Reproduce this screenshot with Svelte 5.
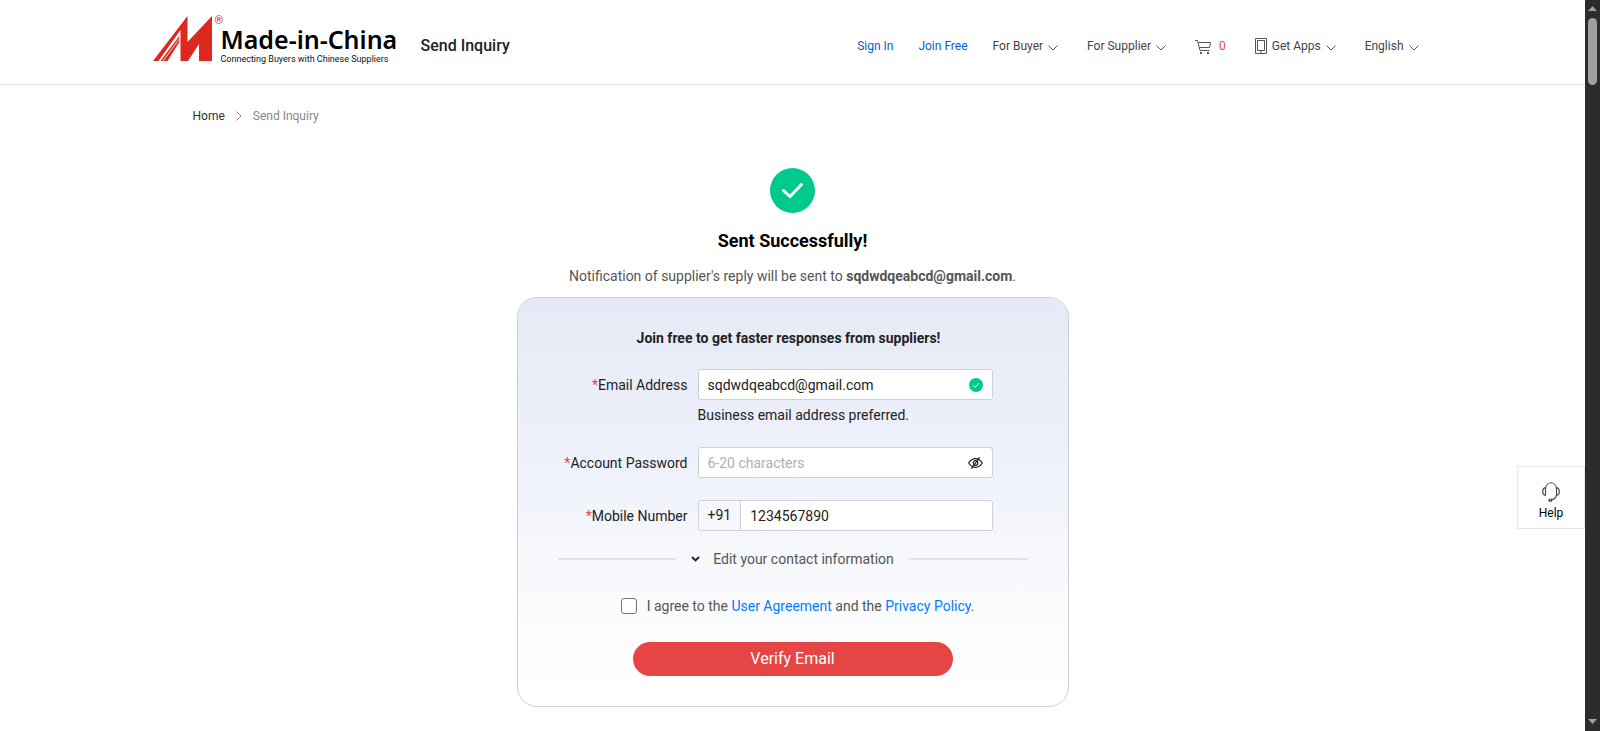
<script>
  let email = $state('sqdwdqeabcd@gmail.com');
  let password = $state('');
  let phone = $state('1234567890');
  let agreed = $state(false);
</script>

{#snippet chevron()}
  <svg class="chevron" viewBox="0 0 10 6" aria-hidden="true"><path d="M.5 .5 5 5 9.500 .5" /></svg>
{/snippet}

<div class="screen">
  <div class="page">
    <header>
      <div class="header-inner">
        <a class="logo" href="#home">
          <svg class="mark" viewBox="0 0 60 46" aria-hidden="true">
            <path fill="#dc281e" d="M0 45 34.500 0V26L59 0V45H46V28L35 45H27.500V14L5.500 45ZM7.500 45 26.300 20V26L14.500 45Z" />
            <path fill="none" stroke="#fff" stroke-width=".8" d="M10 45 26.500 22.500" />
          </svg>
          <span class="reg">®</span>
          <span class="wordmark">
            <span class="name">Made-in-China</span>
            <span class="tagline">Connecting Buyers with Chinese Suppliers</span>
          </span>
        </a>
        <span class="page-name">Send Inquiry</span>
        <nav>
          <a class="blue" href="#signin">Sign In</a>
          <a class="blue join" href="#join">Join Free</a>
          <button type="button">For Buyer {@render chevron()}</button>
          <button type="button">For Supplier {@render chevron()}</button>
          <a class="cart" href="#cart">
            <svg width="17" height="15" viewBox="0 0 17 15" aria-hidden="true">
              <path fill="none" stroke="#555" d="M0 1.500H2.500L5 11.500H14.500M3.500 3.500H15.500L14.500 8.500H4.500" />
              <path fill="#555" d="M5 13h2v2H5zM12 13h2v2h-2z" />
            </svg>
            <span class="count">0</span>
          </a>
          <button type="button" class="apps">
            <svg width="12" height="16" viewBox="0 0 12 16" aria-hidden="true">
              <path fill="none" stroke="#555" d="M.5 .5h11v15H.5zM2.500 2.500h7v10h-7zM5 14h2" />
            </svg>
            Get Apps {@render chevron()}
          </button>
          <button type="button">English {@render chevron()}</button>
        </nav>
      </div>
    </header>

    <main>
      <div class="breadcrumb">
        <a href="#home">Home</a>
        <svg width="6" height="10" viewBox="0 0 6 10" aria-hidden="true"><path d="M.5 .5 5 5 .5 9.500" fill="none" stroke="#888" /></svg>
        <span>Send Inquiry</span>
      </div>

      <section class="result">
        <svg class="tick" width="46" height="46" viewBox="0 0 46 46" aria-hidden="true">
          <circle cx="22.500" cy="22.500" r="22.500" fill="#00c98d" />
          <path d="M13.500 22.500 20 28.500 31.500 16.500" fill="none" stroke="#fff" stroke-width="3" stroke-linecap="round" stroke-linejoin="round" />
        </svg>
        <h1>Sent Successfully!</h1>
        <p class="notice">Notification of supplier's reply will be sent to <b>{email}</b>.</p>

        <form class="card">
          <h2>Join free to get faster responses from suppliers!</h2>

          <div class="row">
            <label for="email"><i>*</i>Email Address</label>
            <div class="field">
              <input id="email" type="text" bind:value={email} />
              <svg width="14" height="14" viewBox="0 0 14 14" aria-hidden="true">
                <circle cx="7" cy="7" r="7" fill="#00c98d" />
                <path d="M4 7.200 6.200 9.200 10 5" fill="none" stroke="#fff" />
              </svg>
            </div>
            <p class="hint">Business email address preferred.</p>
          </div>

          <div class="row">
            <label for="password"><i>*</i>Account Password</label>
            <div class="field">
              <input id="password" type="password" placeholder="6-20 characters" bind:value={password} />
              <button class="eye" type="button" aria-label="Show password">
                <svg width="15" height="12" viewBox="0 0 15 12" aria-hidden="true">
                  <g fill="none" stroke="#222" stroke-width="1.200">
                    <path d="M.7 6C3 2.500 5 1.700 7.500 1.700S12 2.500 14.300 6C12 9.500 10 10.300 7.500 10.300S3 9.500 .7 6Z" />
                    <circle cx="7.500" cy="6" r="2.300" />
                    <path d="M11.500 .3 3.500 11.700" />
                  </g>
                </svg>
              </button>
            </div>
          </div>

          <div class="row">
            <label for="phone"><i>*</i>Mobile Number</label>
            <div class="field">
              <span class="code">+91</span>
              <input id="phone" type="text" bind:value={phone} />
            </div>
          </div>

          <div class="divider">
            <button type="button">
              <svg width="9" height="6" viewBox="0 0 9 6" aria-hidden="true"><path d="M1 1 4.500 4.500 8 1" fill="none" stroke="#222" stroke-width="1.800" /></svg>
              Edit your contact information
            </button>
          </div>

          <div class="agree">
            <input id="agree" type="checkbox" bind:checked={agreed} />
            <label for="agree">I agree to the <a href="#terms">User Agreement</a> and the <a href="#privacy">Privacy Policy</a>.</label>
          </div>

          <button class="submit" type="button">Verify Email</button>
        </form>
      </section>
    </main>

    <button class="help" type="button">
      <svg width="18" height="20" viewBox="0 0 18 20" aria-hidden="true">
        <g fill="none" stroke="#444" stroke-width="1.100">
          <path d="M3.500 13.500V6.500C4 3 6.500 .7 9 .7s5 2.300 5.500 5.800v7C13.500 16.500 12 17.500 9.500 18" />
          <path d="M3.500 5.500C1.500 6 .7 7.500 .7 9.500s.8 3.500 2.800 4M14.500 5.500c2 .5 2.800 2 2.800 4s-.8 3.500-2.800 4" />
          <path d="M6 18.500H7.500M7.500 17.300H9.500V19.300H7.500Z" />
        </g>
      </svg>
      Help
    </button>
  </div>

  <div class="scrollbar" aria-hidden="true">
    <svg width="9" height="5" viewBox="0 0 9 5"><path d="M4.500 0 9 5H0Z" fill="#a0a0a0" /></svg>
    <span class="thumb"></span>
    <svg width="9" height="5" viewBox="0 0 9 5"><path d="M0 0H9L4.500 5Z" fill="#a0a0a0" /></svg>
  </div>
</div>

<style>
  :global(body) {
    background: #fff;
  }
  .screen {
    display: grid;
    grid-template-columns: minmax(0, 1fr) 15px;
    min-height: 100vh;
    font: 14px/20px Roboto, "Liberation Sans", sans-serif;
    color: #222;
  }
  button,
  input {
    font: inherit;
    color: inherit;
  }
  button {
    border: 0;
    padding: 0;
    background: none;
    cursor: pointer;
  }
  a {
    color: inherit;
    text-decoration: none;
  }
  h1, h2, p {
    margin: 0;
  }

  header {
    border-bottom: 1px solid #e4e5ea;
  }
  .header-inner {
    display: flex;
    align-items: center;
    max-width: 1280px;
    height: 84px;
    margin: 0 auto;
  }
  .logo {
    display: flex;
    align-items: flex-start;
    height: 52px;
    color: #111;
  }
  .mark {
    width: 60px;
    height: 46px;
  }
  .reg {
    width: 8px;
    margin-left: 2px;
    font-size: 11px;
    line-height: 10px;
    color: #dc281e;
  }
  .wordmark {
    display: flex;
    flex-direction: column;
    width: 178px;
    margin: 8px 0 0 -2px;
    white-space: nowrap;
  }
  .name {
    font: 600 25px/30px "Noto Sans", "Open Sans", sans-serif;
    color: #000;
  }
  .tagline {
    font-size: 9px;
    line-height: 10px;
  }
  .page-name {
    margin: 7px auto 0 22px;
    font-size: 16px;
    font-weight: 500;
  }
  nav {
    display: flex;
    align-items: center;
    gap: 29px;
    margin: 8px 14px 0 0;
    font-size: 12px;
    line-height: 16px;
    color: #444;
  }
  nav a,
  nav button {
    display: flex;
    align-items: center;
    gap: 5px;
    white-space: nowrap;
  }
  nav .blue {
    margin-right: -4px;
    color: #0064c8;
  }
  nav .cart {
    gap: 7px;
  }
  .count {
    color: #e64545;
  }
  .chevron {
    width: 10px;
    height: 6px;
    margin-top: 3px;
    fill: none;
    stroke: #555;
  }

  .breadcrumb {
    display: flex;
    align-items: center;
    gap: 11px;
    max-width: 1200px;
    margin: 21px auto 0;
    font-size: 12px;
    color: #888;
  }
  .breadcrumb a {
    color: #333;
  }

  .result {
    display: flex;
    flex-direction: column;
    align-items: center;
    padding: 42px 0 24px;
  }
  .tick {
    display: block;
  }
  h1 {
    margin-top: 15px;
    font-size: 18px;
    font-weight: 700;
    line-height: 24px;
    color: #000;
  }
  .notice {
    margin: 13px 0 11px;
    color: #555;
  }

  .card {
    box-sizing: border-box;
    width: 100%;
    max-width: 552px;
    padding: 30px 40px;
    border: 1px solid #cdd1d8;
    border-radius: 20px;
    background: linear-gradient(#e6eaf6, #eff2fb 44%, #f6f7fb 60%, #fff 95%);
  }
  h2 {
    margin: 0 8px 21px 0;
    font-size: 14px;
    font-weight: 700;
    text-align: center;
  }
  .row {
    display: grid;
    grid-template-columns: 130px 295px;
    column-gap: 10px;
    align-items: center;
    margin-bottom: 22px;
  }
  .row label {
    text-align: right;
    white-space: nowrap;
  }
  .row i {
    font-style: normal;
    color: #e64545;
  }
  .field {
    display: flex;
    align-items: center;
    box-sizing: border-box;
    height: 31px;
    padding-right: 9px;
    border: 1px solid #cdd1da;
    border-radius: 3px;
    background: #fff;
  }
  .field input {
    flex: 1;
    min-width: 0;
    padding: 0 9px;
    border: 0;
    outline: 0;
    background: none;
  }
  .field input::placeholder {
    color: #b0b0b0;
    opacity: 1;
  }
  .eye {
    display: flex;
  }
  .code {
    padding: 0 9px;
    border-right: 1px solid #cdd1da;
    border-radius: 3px 0 0 3px;
    background: #f5f7fc;
    line-height: 29px;
  }
  .hint {
    grid-column: 2;
    margin-top: 5px;
  }

  .divider {
    display: flex;
    align-items: center;
    gap: 15px;
    margin-top: -4px;
    color: #555;
  }
  .divider::before,
  .divider::after {
    content: "";
    flex: 1;
    height: 2px;
    background: #e2e4e8;
  }
  .divider button {
    display: flex;
    align-items: center;
    gap: 13px;
  }

  .agree {
    display: flex;
    align-items: center;
    justify-content: center;
    gap: 10px;
    margin: 27px 0 26px 10px;
    color: #555;
  }
  .agree input {
    appearance: none;
    box-sizing: border-box;
    width: 16px;
    height: 16px;
    margin: 0;
    border: 1px solid #767676;
    border-radius: 3px;
    background: #fff;
  }
  .agree input:checked {
    background: #007dfa;
  }
  .agree a {
    color: #007dfa;
  }
  .submit {
    display: block;
    width: 100%;
    max-width: 320px;
    margin: 0 auto;
    border-radius: 17px;
    background: #e64545;
    font-size: 16px;
    line-height: 34px;
    color: #fff;
  }

  .help {
    position: fixed;
    top: 466px;
    right: 15px;
    display: flex;
    flex-direction: column;
    align-items: center;
    gap: 2px;
    box-sizing: border-box;
    width: 68px;
    padding: 15px 0 6px;
    border: 1px solid #e1e9f2;
    background: #fff;
    font-size: 12px;
    line-height: 18px;
    color: #000;
  }

  .scrollbar {
    position: sticky;
    top: 0;
    display: flex;
    flex-direction: column;
    align-items: center;
    box-sizing: border-box;
    height: 100vh;
    padding: 6px 0 7px;
    background: #2c2c2c;
  }
  .thumb {
    width: 9px;
    height: 67px;
    margin: 7px 0 auto;
    border-radius: 5px;
    background: #9f9f9f;
  }
</style>
